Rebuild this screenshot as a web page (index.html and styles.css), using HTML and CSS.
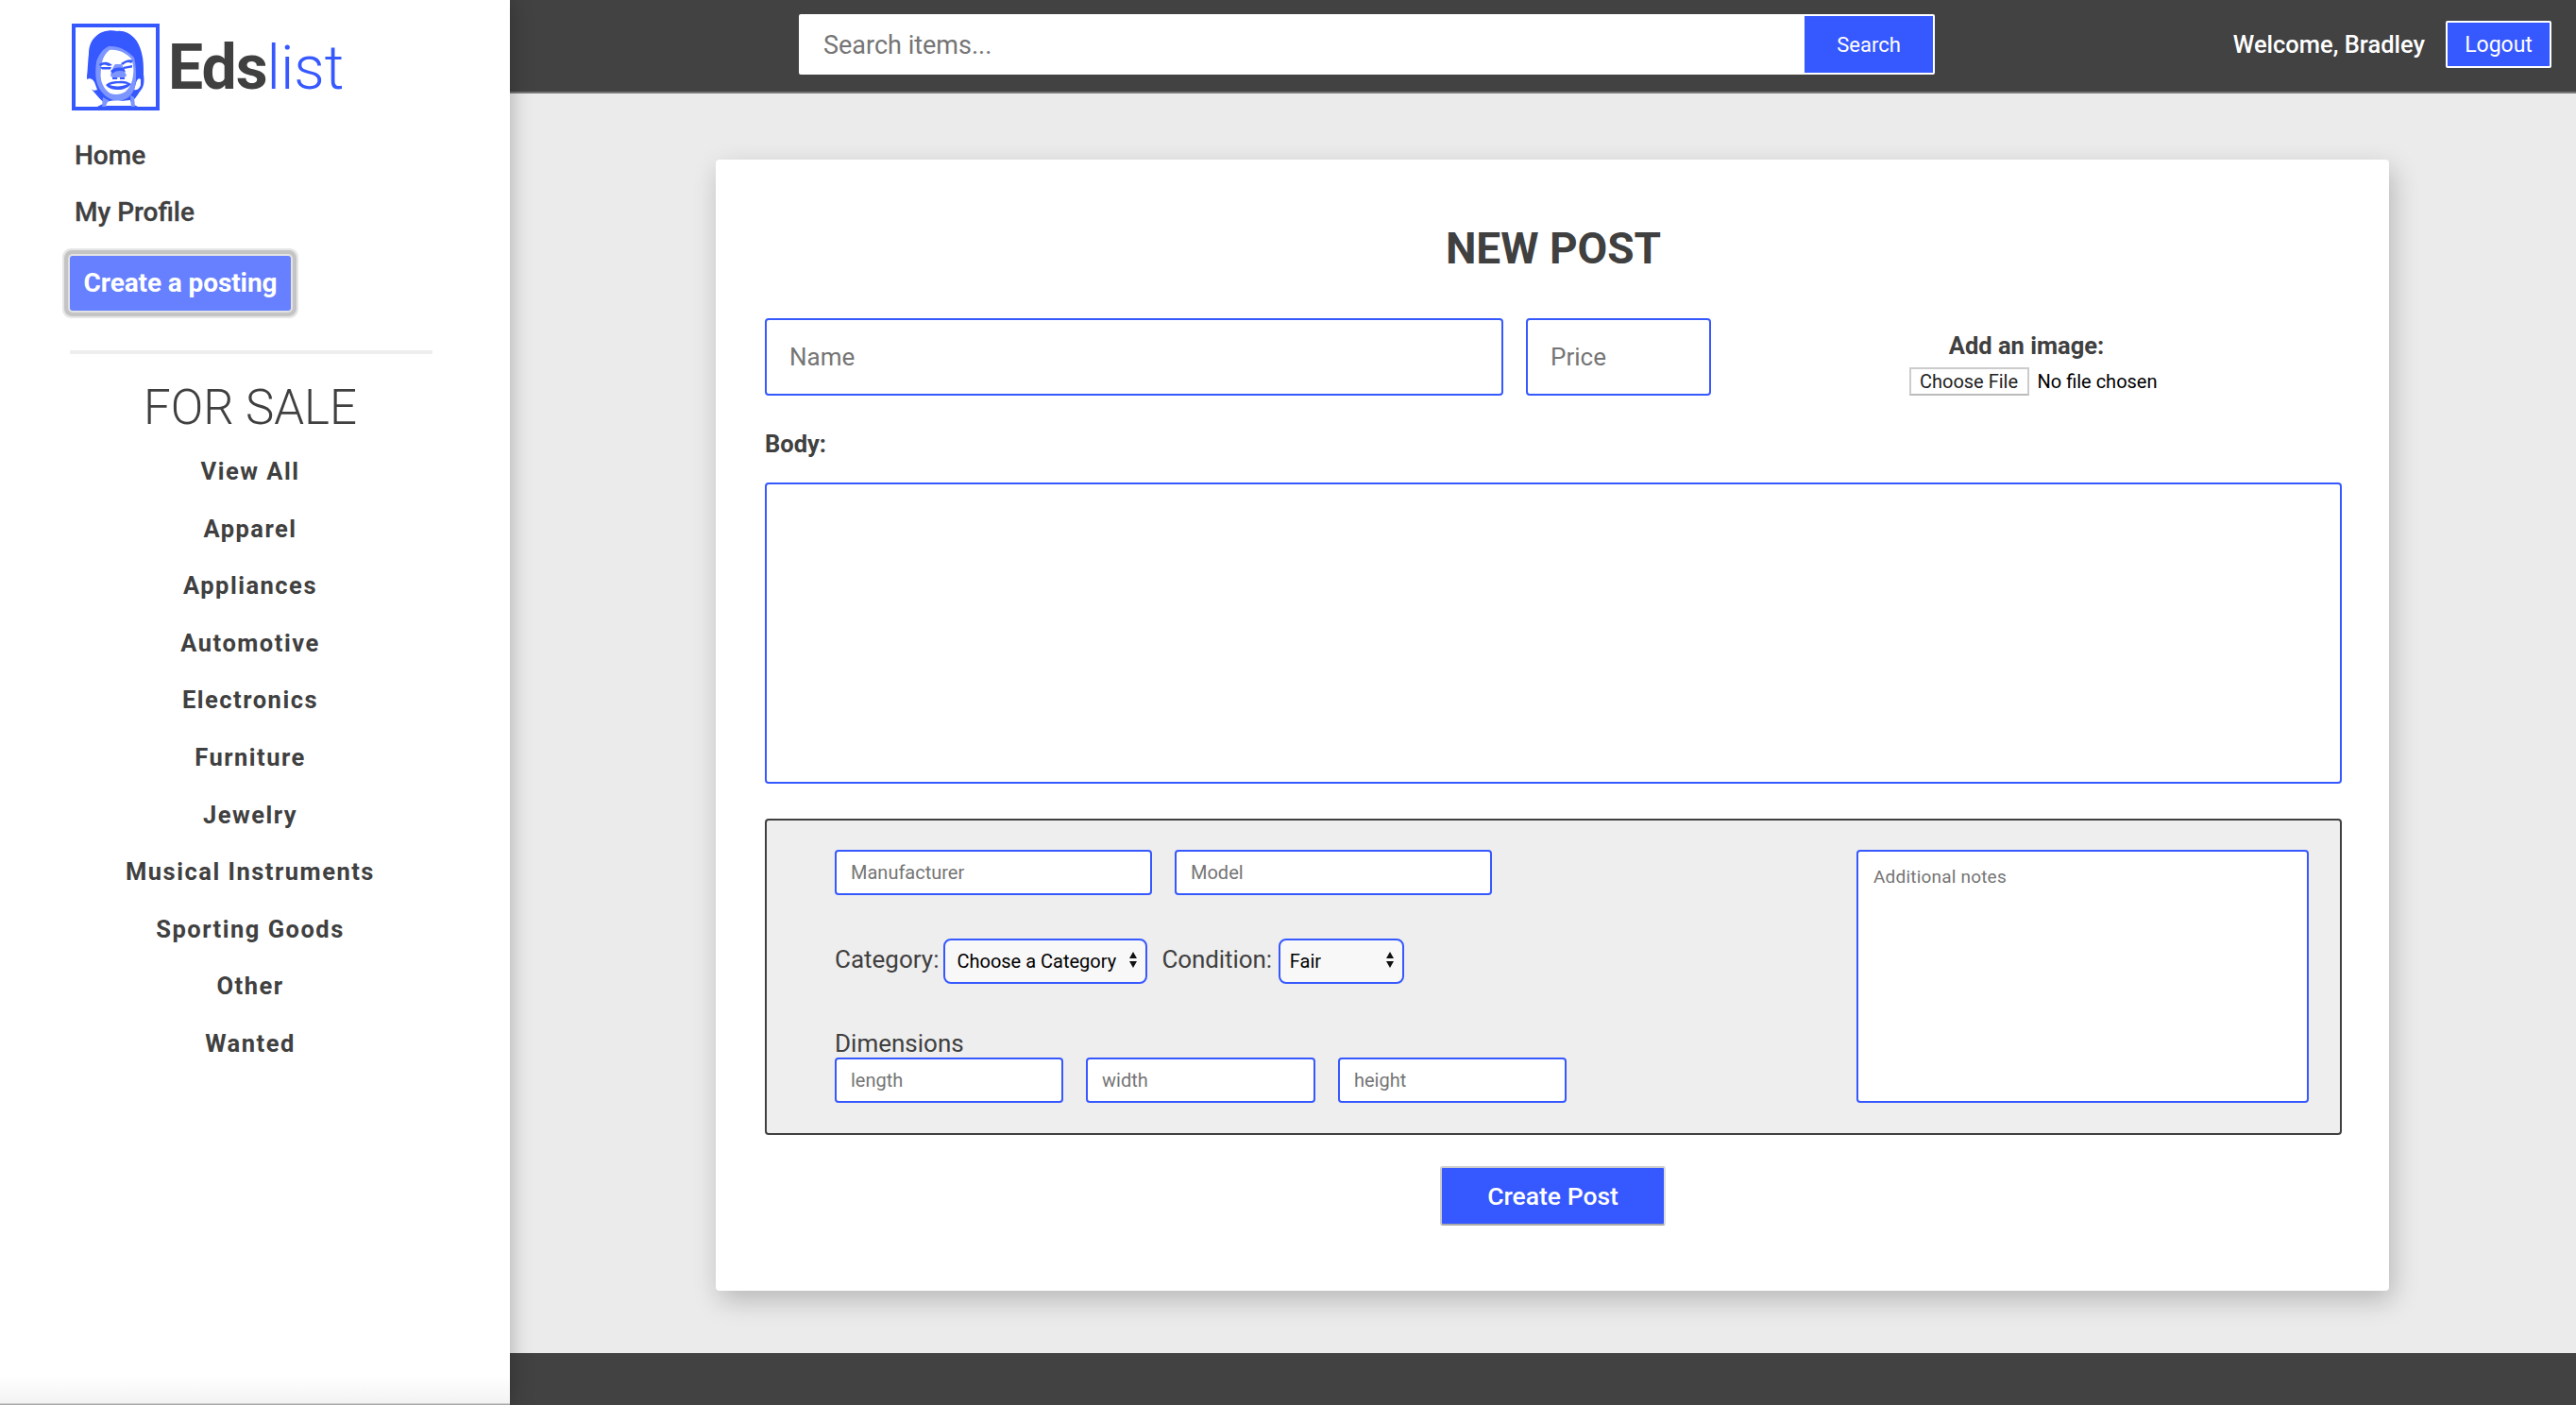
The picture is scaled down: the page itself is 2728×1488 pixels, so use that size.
FILE: index.html
```html
<!DOCTYPE html>
<html lang="en">
<head>
<meta charset="utf-8">
<title>Edslist - New Post</title>
<link rel="stylesheet" href="styles.css">
</head>
<body>
<div class="page">
  <aside class="sidebar">
    <div class="brand">
      <svg class="logo" viewBox="0 0 93 92" aria-hidden="true">
        <rect x="2" y="2" width="89" height="88" fill="#fff" stroke="#3658ff" stroke-width="4"/>
        <path class="blue" d="M48 8C41 6 31 8 26 13C20 18 18 25 18 32C17 40 17 48 16 56C16 62 19 68 24 73C28 78 32 82 35 84L27 88H70L62 84C66 81 69 77 72 72C77 67 77 60 76 54C76 46 76 38 74 31C72 24 70 19 66 15C61 10 55 7 48 8Z"/>
        <path class="white" d="M15 60C18 57 22 58 24 62L27 70C24 72 20 70 18 66ZM73 59C70 57 69 60 68 63L66 70C70 71 72 68 73 65Z"/>
        <path class="light" d="M39 24C33 27 28 33 26 41C25 48 25 55 26 60C27 66 30 71 35 76C40 80 46 82 50 82C55 81 60 79 63 75C67 70 68 64 68 58C68 50 68 43 66 36C60 29 50 23 39 24Z"/>
        <path class="white" d="M40 28C36 31 33 36 32 41C31 48 30 54 31 59C32 65 36 71 41 74C47 76 52 75 57 72C62 67 64 62 65 55C66 48 65 42 63 37C57 31 49 27 40 28Z"/>
        <path class="light" d="M33 78L40 82L36 88H32ZM62 76L66 78L67 88H63Z"/>
        <path class="white" d="M38 83C44 80 50 83 62 81L63 87L36 87Z"/>
        <path class="blue" d="M29 43C34 40 38 40 43 44L39 45C36 43 33 43 30 45ZM52 42C57 39 61 37 65 39L63 42C60 40 57 41 54 44Z"/>
        <path class="blue" d="M30 46L42 46L41 48.500L32 48.500ZM54 46L64 44L64 46.500L55 48Z"/>
        <path class="light" d="M41 55C42 50 44 45 46 43L53 43C55 47 56 51 58 55C57 58 52 57 50 57C47 58 42 58 41 55Z"/>
        <path class="blue" d="M41 50C45 46 51 46 55 47L57 51C51 49 46 50 43 53ZM43 57H48V59H43ZM51 57H56V59H51Z"/>
        <path class="blue" d="M36 65C40 61 46 61 50 61C54 60 59 61 63 64C59 68 55 70 49 70C44 70 39 69 36 65ZM40 65C45 67 54 67 59 64C54 63 44 63 40 65Z"/>
      </svg>
      <span class="brand-text"><b>Eds</b><span class="brand-list">list</span></span>
    </div>
    <nav class="primary-nav">
      <a class="nav-link" href="#">Home</a>
      <a class="nav-link" href="#">My Profile</a>
      <a class="posting-btn" href="#">Create a posting</a>
    </nav>
    <hr class="divider">
    <h2 class="sale-title">FOR SALE</h2>
    <ul class="categories">
      <li>View All</li>
      <li>Apparel</li>
      <li>Appliances</li>
      <li>Automotive</li>
      <li>Electronics</li>
      <li>Furniture</li>
      <li>Jewelry</li>
      <li>Musical Instruments</li>
      <li>Sporting Goods</li>
      <li>Other</li>
      <li>Wanted</li>
    </ul>
  </aside>
  <div class="main">
    <header class="topbar">
      <form class="search">
        <input class="search-input" type="text" placeholder="Search items...">
        <button class="search-btn" type="button">Search</button>
      </form>
      <span class="welcome">Welcome, Bradley</span>
      <button class="logout" type="button">Logout</button>
    </header>
    <main class="content">
      <form class="card">
        <h1 class="card-title">NEW POST</h1>
        <div class="row-top">
          <input class="field field-name" type="text" placeholder="Name">
          <input class="field field-price" type="text" placeholder="Price">
          <div class="image-block">
            <label class="strong-label image-label">Add an image:</label>
            <input class="file" type="file">
          </div>
        </div>
        <label class="strong-label body-label">Body:</label>
        <textarea class="field body-text"></textarea>
        <section class="details">
          <div class="details-left">
            <div class="detail-row">
              <input class="small-field w-336" type="text" placeholder="Manufacturer">
              <input class="small-field w-336" type="text" placeholder="Model">
            </div>
            <div class="detail-row select-row">
              <span class="plain-label cat-label">Category:</span>
              <span class="select-wrap">
                <select class="select cat-select"><option>Choose a Category</option></select>
                <svg class="arrows" viewBox="0 0 8 17" aria-hidden="true"><path d="M4 0L8 7H0ZM0 10H8L4 17Z"/></svg>
              </span>
              <span class="plain-label cond-label">Condition:</span>
              <span class="select-wrap">
                <select class="select cond-select"><option>Fair</option></select>
                <svg class="arrows" viewBox="0 0 8 17" aria-hidden="true"><path d="M4 0L8 7H0ZM0 10H8L4 17Z"/></svg>
              </span>
            </div>
            <div class="plain-label dim-label">Dimensions</div>
            <div class="detail-row">
              <input class="small-field w-242" type="text" placeholder="length">
              <input class="small-field w-243" type="text" placeholder="width">
              <input class="small-field w-242" type="text" placeholder="height">
            </div>
          </div>
          <textarea class="notes" placeholder="Additional notes"></textarea>
        </section>
        <div class="submit-row">
          <button class="submit" type="button">Create Post</button>
        </div>
      </form>
    </main>
    <footer class="footer"></footer>
  </div>
</div>
</body>
</html>
```

FILE: styles.css
```css
* { box-sizing: border-box; }
html, body { margin: 0; height: 100%; }
body { font-family: Roboto, "Liberation Sans", sans-serif; color: #404040; background: #ebebeb; overflow: hidden; }
input, textarea, select, button { font-family: Roboto, "Liberation Sans", sans-serif; }
input::placeholder, textarea::placeholder { color: #757575; opacity: 1; }

.page { display: flex; height: 100vh; }

.sidebar {
  width: 540px; flex: none; position: relative; z-index: 2;
  padding: 24px 0 0 76px;
  background: linear-gradient(to bottom, #fff 1457px, #f3f3f3 1486px, #aaa 1487px);
  box-shadow: 0 0 22px rgba(0,0,0,.28);
}
.brand { display: flex; align-items: center; gap: 9px; height: 93px; }
.logo { width: 93px; height: 92px; flex: none; display: block; }
.blue { fill: #3658ff; }
.light { fill: #7d96ff; }
.white { fill: #fff; }
.brand-text { font-size: 66px; line-height: 1; letter-spacing: -1px; position: relative; top: 1px; }
.brand-text b { font-weight: 700; }
.brand-list { font-size: 64px; font-weight: 300; color: #3658ff; letter-spacing: 0; }

.primary-nav { display: flex; flex-direction: column; align-items: flex-start; margin-top: 28px; }
.nav-link { font-size: 28px; font-weight: 500; line-height: 40px; height: 40px; margin-bottom: 20px; margin-left: 3px; color: #404040; text-decoration: none; -webkit-text-stroke: .3px #404040; }
.posting-btn {
  display: block; width: 234px; height: 58px; margin-top: 6px; margin-left: -2px;
  background: #6680ff; color: #fff; border-radius: 3px;
  font-size: 28px; font-weight: 700; line-height: 58px; letter-spacing: -.1px; text-align: center; text-decoration: none;
  box-shadow: 0 0 0 2px #e2e2e2, 0 0 0 6px #c4c4c4, 0 0 0 8px #e6e6e6;
}
.divider { width: 384px; height: 4px; margin: 42px 0 0 -2px; border: 0; background: #eee; }
.sale-title { width: 378px; margin: 27px 0 0 0; font-size: 51px; font-weight: 300; line-height: 60px; text-align: center; color: #404040; }
.categories { list-style: none; width: 378px; margin: 7px 0 0 0; padding: 0; }
.categories li { font-size: 25.500px; font-weight: 700; line-height: 60.600px; letter-spacing: 1.500px; text-align: center; }

.main { flex: 1; min-width: 0; display: flex; flex-direction: column; }

.topbar { height: 99px; flex: none; display: flex; align-items: center; padding: 0 26px 3px 306px; background: #424242; border-bottom: 2px solid #777; }
.search { display: flex; width: 1203px; height: 64px; background: #fff; border: 2px solid #fff; border-radius: 2px; }
.search-input { flex: 1; min-width: 0; border: 0; outline: 0; padding: 2px 24px 0; font-size: 27px; background: transparent; }
.search-btn { width: 136px; border: 0; background: #3658ff; color: #fff; font-size: 22px; padding: 0; }
.welcome { margin-left: auto; color: #fff; font-size: 25.500px; font-weight: 500; }
.logout { width: 112px; height: 50px; margin-left: 22px; padding: 0; background: #3658ff; border: 2px solid #fff; border-radius: 2px; color: #fff; font-size: 23px; }

.content { flex: 1; min-height: 0; padding: 70px 198px 0 218px; }
.card { height: 1198px; padding: 63px 50px 0 52px; background: #fff; border-radius: 4px; box-shadow: 4px 10px 28px rgba(0,0,0,.22); }
.card-title { margin: 0 0 45px; padding-top: 1px; height: 60px; font-size: 46px; font-weight: 700; line-height: 60px; text-align: center; color: #404040; }

.field { border: 2px solid #3658ff; border-radius: 4px; outline: 0; background: #fff; font-size: 26px; padding: 0 24px; }
.row-top { display: flex; gap: 24px; height: 82px; }
.field-name { width: 782px; height: 82px; }
.field-price { width: 196px; height: 82px; }
.image-block { flex: 1; display: flex; flex-direction: column; align-items: center; justify-content: flex-end; }
.strong-label { font-size: 25.500px; font-weight: 700; line-height: 30px; display: block; }
.image-label { margin-bottom: 8px; margin-left: -24px; }
.file { font-size: 20px; height: 30px; width: 264px; margin-left: -9px; color: #000; font-family: Roboto, sans-serif; }
.file::file-selector-button { height: 30px; width: 127px; margin-right: 9px; padding: 0; background: #fff; border: 2px solid #ccc; border-bottom-color: #bbb; border-radius: 0; font: inherit; color: #222; }
.body-label { margin-top: 36px; }
.body-text { display: block; width: 100%; height: 319px; margin-top: 26px; resize: none; }

.details { display: flex; justify-content: space-between; height: 335px; margin-top: 37px; padding: 31px 33px 31px 72px; background: #eee; border: 2px solid #404040; border-radius: 4px; }
.details-left { display: flex; flex-direction: column; }
.detail-row { display: flex; gap: 24px; height: 48px; }
.small-field { height: 48px; border: 2px solid #3658ff; border-radius: 4px; outline: 0; background: #fff; font-size: 20px; padding: 0 15px; }
.w-336 { width: 336px; }
.w-242 { width: 242px; }
.w-243 { width: 243px; }
.select-row { gap: 0; align-items: center; margin-top: 46px; }
.plain-label { font-size: 26px; line-height: 30px; color: #404040; }
.cat-label { margin-right: 5px; position: relative; top: -2px; }
.cond-label { margin: 0 7px 0 15px; position: relative; top: -2px; letter-spacing: -.1px; }
.select-wrap { position: relative; display: block; height: 48px; }
.select { appearance: none; -webkit-appearance: none; display: block; height: 48px; padding: 0 0 0 12px; background: #f8f8f8; border: 2px solid #3658ff; border-radius: 8px; outline: 0; font-size: 20px; color: #000; }
.cat-select { width: 216px; }
.cond-select { width: 133px; padding-left: 10px; }
.arrows { position: absolute; right: 11px; top: 14px; width: 8px; height: 17px; fill: #111; pointer-events: none; }
.dim-label { margin-top: 48px; }
.notes { width: 479px; height: 268px; padding: 15px 16px; border: 2px solid #3658ff; border-radius: 4px; outline: 0; resize: none; background: #fff; font-size: 19px; line-height: 24px; letter-spacing: .2px; }

.submit-row { display: flex; justify-content: center; margin-top: 33px; margin-left: -1px; }
.submit { width: 239px; height: 63px; padding: 0; background: #3658ff; color: #fff; border: 0; border-top: 2px solid #ccc; border-left: 2px solid #ccc; border-bottom: 2px solid #aaa; border-right: 2px solid #ddd; border-radius: 3px; font-size: 26.500px; font-weight: 500; }

.footer { height: 55px; flex: none; background: #424242; margin-top: auto; }
```
